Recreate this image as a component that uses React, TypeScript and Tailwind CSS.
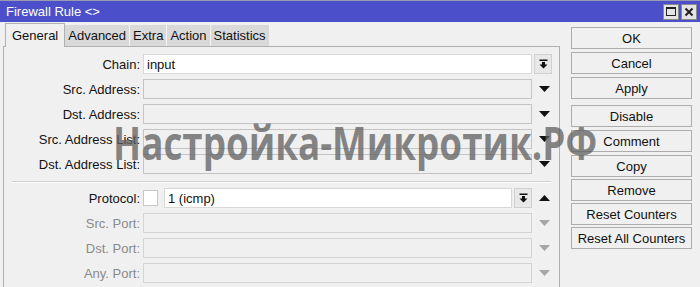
import React from "react";

const DropBtn = () => (
  <div className="w-[18px] h-[20px] border border-[#d0d0d0] bg-[#e8e8e8] flex items-center justify-center ml-[2px]">
    <svg width="9" height="10" viewBox="0 0 9 10">
      <rect x="0.5" y="0.5" width="8" height="1.5" fill="#111" />
      <path d="M3 3 H6 V5.5 H8.5 L4.5 9.5 L0.5 5.5 H3 Z" fill="#111" />
    </svg>
  </div>
);

const Arrow = ({ up = false, color = "#111" }: { up?: boolean; color?: string }) => (
  <div className="w-[20px] flex items-center justify-center">
    <svg width="11" height="6" viewBox="0 0 11 6">
      {up ? <path d="M0 6 L5.5 0 L11 6 Z" fill={color} /> : <path d="M0 0 L11 0 L5.5 6 Z" fill={color} />}
    </svg>
  </div>
);

const Row = ({ label, children, gray = false }: { label: string; children: React.ReactNode; gray?: boolean }) => (
  <div className="flex items-center h-[20px]">
    <div className={`w-[139px] text-right pr-[3px] ${gray ? "text-[#8a8a8a]" : "text-[#111]"}`}>{label}</div>
    {children}
  </div>
);

const EmptyField = ({ gray = false }: { gray?: boolean }) => (
  <>
    <div className={`w-[389px] h-[20px] border ${gray ? "border-[#d4d4d4]" : "border-[#c4c4c4]"} bg-[#f0f0f0]`} />
    <div className="ml-[2px]">
      <Arrow color={gray ? "#a6a6a6" : "#111"} />
    </div>
  </>
);

const Btn = ({ label, mt = "mt-[3px]" }: { label: string; mt?: string }) => (
  <div className={`${mt} w-[121px] h-[22px] border border-[#adadad] bg-[#f0f0f0] flex items-center justify-center text-[#111]`}>
    {label}
  </div>
);

export default function App() {
  return (
    <div
      className="relative w-[700px] h-[287px] bg-[#f0f0f0] overflow-hidden text-[13px] leading-none"
      style={{ fontFamily: '"Liberation Sans", Arial, sans-serif' }}
    >
      {/* title bar */}
      <div className="h-[22px] bg-[#4b4fc9] border-t border-[#9a9ab0] flex items-center justify-between pl-[6px] pr-[3px]">
        <span className="text-white text-[13px]">Firewall Rule &lt;&gt;</span>
        <div className="flex gap-[2px]">
          <div className="w-[16px] h-[16px] bg-[#e4e4e4] border border-[#8a8a8a] flex items-center justify-center">
            <div className="w-[10px] h-[9px] border border-[#222] border-t-2" />
          </div>
          <div className="w-[16px] h-[16px] bg-[#e4e4e4] border border-[#8a8a8a] flex items-center justify-center">
            <svg width="10" height="10" viewBox="0 0 10 10">
              <path d="M1.5 1.5 L8.5 8.5 M8.5 1.5 L1.5 8.5" stroke="#222" strokeWidth="2" />
            </svg>
          </div>
        </div>
      </div>

      <div className="flex">
        {/* left side */}
        <div className="w-[560px] pl-[3px]">
          {/* tabs */}
          <div className="flex items-end h-[24px] pl-[2px]">
            <div className="h-[24px] px-[6px] bg-[#f0f0f0] border border-b-0 border-[#b0b0b0] flex items-center text-[#111] relative top-[1px]">
              General
            </div>
            <div className="h-[21px] px-[3px] bg-[#d9d9d9] border-r border-[#f4f4f4] flex items-center text-[#111]">Advanced</div>
            <div className="h-[21px] px-[3px] bg-[#d9d9d9] border-r border-[#f4f4f4] flex items-center text-[#111]">Extra</div>
            <div className="h-[21px] px-[3px] bg-[#d9d9d9] border-r border-[#f4f4f4] flex items-center text-[#111]">Action</div>
            <div className="h-[21px] px-[3px] bg-[#d9d9d9] flex items-center text-[#111]">Statistics</div>
          </div>
          {/* panel */}
          <div className="h-[241px] border-l border-t border-r border-[#b0b0b0] pt-[7px] flex flex-col">
            <div className="flex flex-col gap-[5px]">
              <Row label="Chain:">
                <div className="w-[389px] h-[20px] border border-[#d8d8d8] bg-white flex items-center pl-[3px] text-[#111]">input</div>
                <DropBtn />
              </Row>
              <Row label="Src. Address:">
                <EmptyField />
              </Row>
              <Row label="Dst. Address:">
                <EmptyField />
              </Row>
              <Row label="Src. Address List:">
                <EmptyField />
              </Row>
              <Row label="Dst. Address List:">
                <EmptyField />
              </Row>
            </div>
            <div className="mx-[8px] mt-[7px] h-[2px] border-t border-[#d0d0d0] border-b border-b-white" />
            <div className="flex flex-col gap-[5px] mt-[5px]">
              <Row label="Protocol:">
                <div className="w-[15px] h-[16px] border border-[#c8c8c8] bg-white" />
                <div className="ml-[6px] w-[348px] h-[20px] border border-[#d8d8d8] bg-white flex items-center pl-[3px] text-[#111]">1 (icmp)</div>
                <DropBtn />
                <div className="ml-[2px]">
                  <Arrow up />
                </div>
              </Row>
              <Row label="Src. Port:" gray>
                <EmptyField gray />
              </Row>
              <Row label="Dst. Port:" gray>
                <EmptyField gray />
              </Row>
              <Row label="Any. Port:" gray>
                <EmptyField gray />
              </Row>
            </div>
          </div>
        </div>

        {/* right buttons */}
        <div className="pl-[11px] pt-[5px] flex flex-col">
          <Btn label="OK" mt="mt-0" />
          <Btn label="Cancel" />
          <Btn label="Apply" />
          <Btn label="Disable" mt="mt-[6px]" />
          <Btn label="Comment" />
          <Btn label="Copy" />
          <Btn label="Remove" mt="mt-[2px]" />
          <Btn label="Reset Counters" mt="mt-[2px]" />
          <Btn label="Reset All Counters" mt="mt-[2px]" />
        </div>
      </div>

      {/* watermark */}
      <div
        className="absolute left-[113px] top-[119px] text-[46px] font-bold leading-none text-[rgba(95,95,95,0.75)] whitespace-nowrap pointer-events-none origin-left scale-x-[0.8]"
        style={{ fontFamily: '"Open Sans", sans-serif' }}
      >
        Настройка-Микротик.РФ
      </div>
    </div>
  );
}
